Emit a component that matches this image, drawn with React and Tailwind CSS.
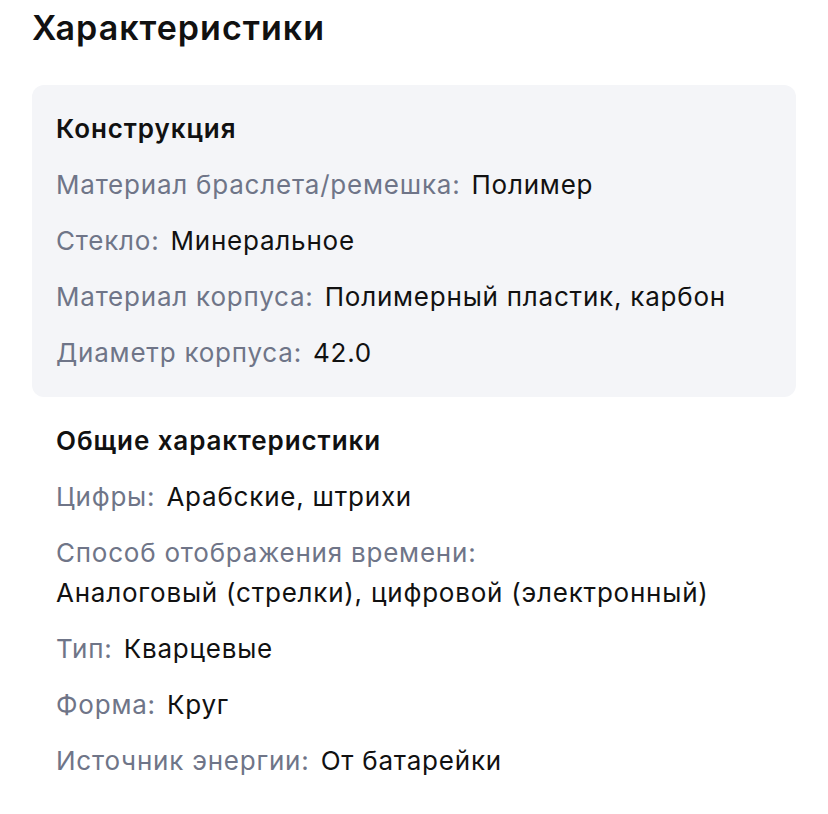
const sections = [
  {
    title: 'Конструкция',
    filled: true,
    rows: [
      ['Материал браслета/ремешка:', 'Полимер'],
      ['Стекло:', 'Минеральное'],
      ['Материал корпуса:', 'Полимерный пластик, карбон'],
      ['Диаметр корпуса:', '42.0'],
    ],
  },
  {
    title: 'Общие характеристики',
    filled: false,
    rows: [
      ['Цифры:', 'Арабские, штрихи'],
      ['Способ отображения времени:', 'Аналоговый (стрелки), цифровой (электронный)'],
      ['Тип:', 'Кварцевые'],
      ['Форма:', 'Круг'],
      ['Источник энергии:', 'От батарейки'],
    ],
  },
]

function Section({ title, filled, rows }) {
  return (
    <section className={`rounded-xl px-6 ${filled ? 'bg-[#f4f5f8] py-6' : 'pt-6'}`}>
      <h3 className="text-[26px] font-semibold leading-[40px] tracking-[0.035em] text-[#111111]">{title}</h3>
      <div className="mt-4 flex flex-col gap-4">
        {rows.map(([label, value]) => (
          <p key={label} className="text-[26px] leading-[40px] tracking-[0.03em]">
            <span className="mr-[3px] text-[#6f7588]">{label}</span>{' '}
            <span className="inline-block text-[#111111]">{value}</span>
          </p>
        ))}
      </div>
    </section>
  )
}

export default function App() {
  return (
    <div className="min-h-screen bg-white px-8 pt-2 font-['Inter',sans-serif]">
      <h2 className="text-[34px] font-semibold leading-[40px] tracking-[0.03em] text-[#111111]">Характеристики</h2>
      <div className="mt-[37px]">
        {sections.map((section) => <Section key={section.title} {...section} />)}
      </div>
    </div>
  )
}
